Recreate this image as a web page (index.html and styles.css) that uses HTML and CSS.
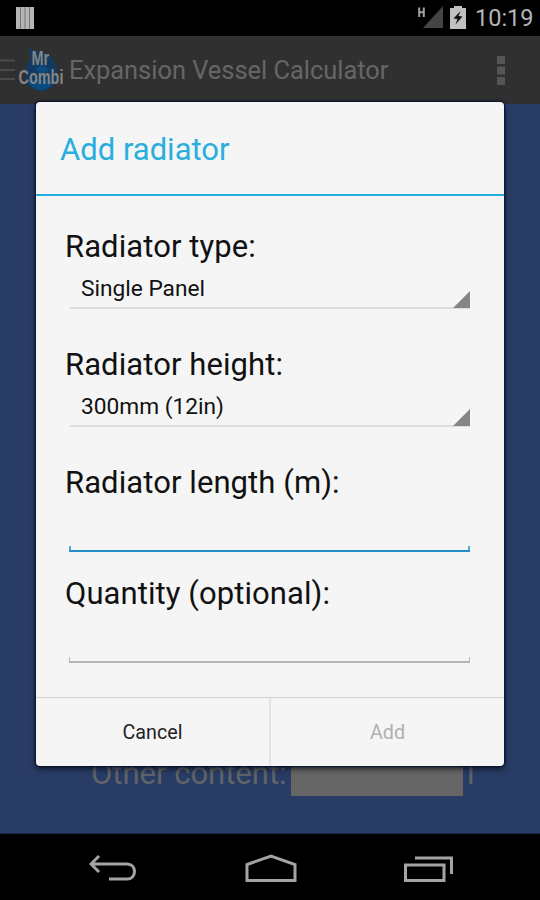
FILE: index.html
```html
<!DOCTYPE html>
<html lang="en">
<head>
    <meta charset="UTF-8">
    <meta name="viewport" content="width=device-width, initial-scale=1.0">
    <title>Expansion Vessel Calculator</title>
    <link rel="stylesheet" href="styles.css">
</head>
<body>
    <div class="phone">
        <div class="status-bar">
            <svg class="notification" width="18" height="22" viewBox="0 0 18 22">
                <rect width="18" height="22" fill="#b4b4b4"/>
                <path d="M4.5 0V22M9 0V22M13.5 0V22" stroke="#777" stroke-width="1"/>
            </svg>
            <div class="status-icons">
                <svg width="25" height="22" viewBox="0 0 25 22">
                    <path d="M5 22L25 0V22Z" fill="#444"/>
                    <path d="M1.2 1.5V11M5.8 1.5V11M1.2 6.2H5.8" stroke="#a0a0a0" stroke-width="2" fill="none"/>
                </svg>
                <svg width="16" height="23" viewBox="0 0 16 23">
                    <path d="M4 0H12V2H16V23H0V2H4Z" fill="#c0c0c0"/>
                    <path d="M10.5 5L3.5 12.5L7.5 13L5.5 18.5L12.5 10.5L8.5 10Z" fill="#111"/>
                </svg>
                <span class="clock">10:19</span>
            </div>
        </div>
        <div class="action-bar">
            <svg class="drawer" width="15" height="22" viewBox="0 0 15 22">
                <path d="M0 1.5H15M0 11H15M0 20H15" stroke="#4b4b4b" stroke-width="2"/>
            </svg>
            <div class="logo">
                <svg width="44" height="46" viewBox="0 0 44 46">
                    <path d="M10 1C14 5 30 3 34 13C38 18 40 24 38 30C36 38 31 44 23 44C13 44 6 37 6 27C6 20 9 15 12 12C11 8 10 5 10 1Z" fill="#123a61"/>
                    <path d="M8 33C12 44 29 48 36 33Z" fill="#0c4b80"/>
                    <path d="M16 22L23 17L31 23L23 27Z" fill="#0c4b80"/>
                </svg>
                <div class="logo-text"><span>Mr</span><span>Combi</span></div>
            </div>
            <h1>Expansion Vessel Calculator</h1>
            <svg class="overflow" width="8" height="29" viewBox="0 0 8 29">
                <path d="M0 0H8V8H0ZM0 10.5H8V18.5H0ZM0 21H8V29H0Z" fill="#555"/>
            </svg>
        </div>
        <div class="content">
            <div class="other-row">
                <span class="other-label">Other content:</span>
                <span class="other-input"></span>
                <span class="other-unit">l</span>
            </div>
        </div>
        <div class="nav-bar">
            <svg width="48" height="28" viewBox="0 0 48 28">
                <path d="M10 2L2 10L10 18M2 10H38C48 10 48 25 38 25H20" fill="none" stroke="#a4a4a4" stroke-width="3"/>
            </svg>
            <svg width="52" height="28" viewBox="0 0 52 28">
                <path d="M2 26.5V10.5L26 2L50 10.5V26.5Z" fill="none" stroke="#a4a4a4" stroke-width="3"/>
            </svg>
            <svg width="50" height="28" viewBox="0 0 50 28">
                <path d="M1.5 11H40V26.5H1.5ZM11 4H47.5V20" fill="none" stroke="#a4a4a4" stroke-width="3"/>
            </svg>
        </div>

        <div class="dialog">
            <h2>Add radiator</h2>
            <div class="form">
                <div class="field">
                    <label>Radiator type:</label>
                    <div class="spinner">Single Panel</div>
                </div>
                <div class="field">
                    <label>Radiator height:</label>
                    <div class="spinner">300mm (12in)</div>
                </div>
                <div class="field short">
                    <label for="length">Radiator length (m):</label>
                    <div class="edit focused"><input type="text" id="length"></div>
                </div>
                <div class="field short">
                    <label for="quantity">Quantity (optional):</label>
                    <div class="edit"><input type="text" id="quantity"></div>
                </div>
            </div>
            <div class="buttons">
                <button>Cancel</button>
                <button disabled>Add</button>
            </div>
        </div>
    </div>
</body>
</html>
```
FILE: styles.css
```css
* {
    margin: 0;
    padding: 0;
    box-sizing: border-box;
}
body {
    font-family: Roboto, sans-serif;
    background: #000;
}
.phone {
    position: relative;
    display: flex;
    flex-direction: column;
    width: 540px;
    height: 900px;
    overflow: hidden;
}
svg {
    display: block;
    flex: none;
}

/* Status bar */
.status-bar {
    display: flex;
    justify-content: space-between;
    height: 36px;
    padding: 7px 8px 0 16px;
    background: #000;
}
.status-icons {
    display: flex;
    gap: 7px;
    margin-top: -1px;
}
.clock {
    width: 57px;
    margin-left: 2px;
    font-size: 23.5px;
    line-height: 25px;
    color: #b5b5b5;
    white-space: nowrap;
}

/* Action bar */
.action-bar {
    display: flex;
    align-items: center;
    height: 68px;
    padding-right: 35px;
    background: #303030;
}
.logo {
    position: relative;
    width: 44px;
    margin: 0 6px 0 4px;
}
.logo-text {
    position: absolute;
    top: 2px;
    left: -10px;
    width: 64px;
    display: flex;
    flex-direction: column;
    align-items: center;
    font-family: "Liberation Sans", sans-serif;
    font-size: 20px;
    font-weight: bold;
    line-height: 19px;
    color: #858585;
    transform: scaleX(0.72);
}
.logo-text span:first-child {
    margin-right: 2px;
}
h1 {
    flex: 1;
    font-size: 25.4px;
    font-weight: 400;
    color: #666;
    white-space: nowrap;
}

/* Page behind the dialog */
.content {
    display: flex;
    align-items: flex-end;
    height: 730px;
    padding: 0 0 37px 91px;
    background: #293c66;
    border-bottom: 1px solid #1b2850;
}
.other-row {
    display: flex;
    align-items: flex-end;
    font-size: 31px;
    line-height: 36px;
    color: #606468;
}
.other-label {
    width: 200px;
    margin-bottom: 4px;
    white-space: nowrap;
}
.other-input {
    width: 172px;
    height: 40px;
    background: #666;
}
.other-unit {
    margin: 0 0 4px 4px;
}

/* Navigation bar */
.nav-bar {
    display: flex;
    justify-content: space-between;
    height: 66px;
    padding: 20px 86px 0 89px;
    background: #000;
}

/* Dialog */
.dialog {
    position: absolute;
    top: 102px;
    left: 36px;
    display: flex;
    flex-direction: column;
    width: 468px;
    height: 664px;
    background: #f5f5f5;
    border-radius: 4px;
    box-shadow: 0 0 2px 1px #06112c, 0 3px 6px rgba(0, 0, 0, 0.6);
}
h2 {
    height: 94px;
    padding-left: 24px;
    font-size: 31px;
    font-weight: 400;
    line-height: 95px;
    color: #2aafdd;
    border-bottom: 2px solid #25addb;
}
.form {
    flex: 1;
    padding: 33px 34px 0 29px;
}
.field {
    height: 118px;
}
.field.short {
    height: 111px;
}
label {
    display: block;
    font-size: 31px;
    line-height: 36px;
    letter-spacing: 0.08px;
    color: #111;
    white-space: nowrap;
}
.spinner {
    position: relative;
    height: 44px;
    margin-left: 5px;
    padding-left: 11px;
    font-size: 22.7px;
    line-height: 48px;
    color: #111;
    border-bottom: 2px solid #dcdcdc;
}
.spinner::after {
    content: "";
    position: absolute;
    right: 0;
    bottom: -1px;
    border-left: 17px solid transparent;
    border-bottom: 17px solid #858585;
}
.edit {
    display: flex;
    align-items: flex-end;
    height: 51px;
    margin-left: 4px;
    border-bottom: 2px solid #b5b5b5;
}
.edit::before,
.edit::after {
    content: "";
    flex: none;
    width: 1px;
    height: 4px;
    background: #b5b5b5;
}
.edit input {
    flex: 1;
    min-width: 0;
    height: 44px;
    font-size: 25px;
    background: transparent;
    border: none;
    outline: none;
}
.edit.focused {
    border-bottom: 2px solid #2290c4;
}
.edit.focused::before,
.edit.focused::after {
    width: 2px;
    background: #5aaed6;
}
.buttons {
    display: flex;
    height: 69px;
    border-top: 1px solid #d4d4d4;
}
.buttons button {
    flex: 1;
    padding-top: 1px;
    font-family: inherit;
    font-size: 19.7px;
    color: #222;
    background: none;
    border: none;
}
.buttons button + button {
    border-left: 2px solid #e4e4e4;
}
.buttons button:disabled {
    color: #b0b0b0;
}
```
